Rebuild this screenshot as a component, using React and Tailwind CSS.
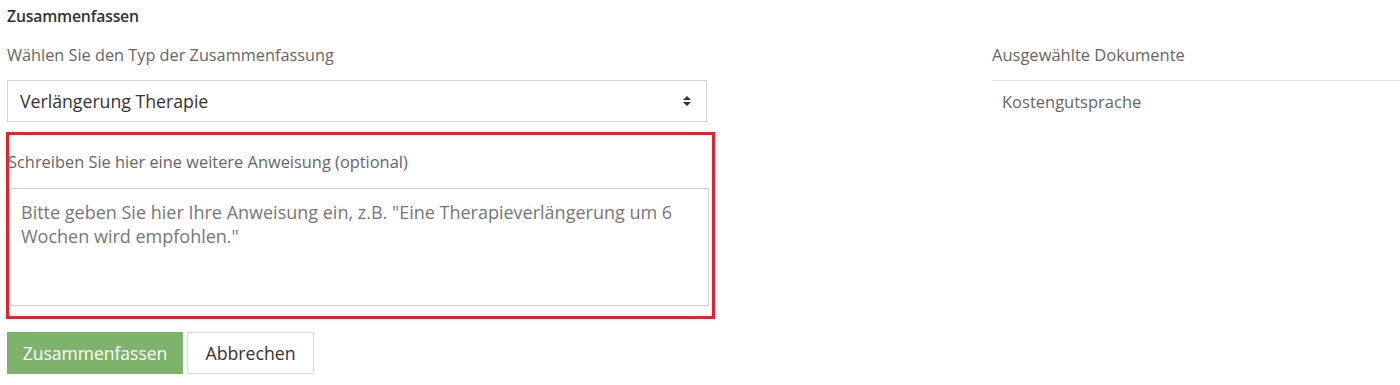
import React from 'react';

const SortIcon = () => (
    <svg width="10" height="14" viewBox="0 0 10 14" className="text-[#333]">
        <path d="M1 6 L5 2 L9 6 Z" fill="currentColor" />
        <path d="M1 8 L5 12 L9 8 Z" fill="currentColor" />
    </svg>
);

const App = () => {
    return (
        <div className="w-[1400px] h-[385px] bg-white overflow-hidden font-['Open_Sans',sans-serif] flex pl-[7px]">
            <div className="w-[709px] shrink-0">
                <h2 className="text-[15.8px] leading-5 font-semibold text-[#333] pt-[6px] tracking-[-0.2px]">Zusammenfassen</h2>
                <label className="block mt-[19px] text-[16.3px] leading-5 text-[#666]">
                    Wählen Sie den Typ der Zusammenfassung
                </label>
                <div className="mt-[15px] w-[700px] h-[42px] border border-[#d4d4d4] flex items-center justify-between pl-[12px] pr-[14px]">
                    <span className="text-[17.7px] text-[#333]">Verlängerung Therapie</span>
                    <SortIcon />
                </div>
                <div className="mt-[10px] -ml-px w-[709px] h-[187px] border-[3px] border-[#e8202b] pt-[17px]">
                    <label className="block text-[16.4px] leading-5 text-[#666] -ml-px">
                        Schreiben Sie hier eine weitere Anweisung (optional)
                    </label>
                    <textarea
                        className="mt-[16px] block w-[700px] h-[118px] border border-[#d0d0d0] resize-none pl-[11px] pr-[12px] py-[11px] text-[18px] leading-6 placeholder:text-[#777] outline-none"
                        placeholder={'Bitte geben Sie hier Ihre Anweisung ein, z.B. "Eine Therapieverlängerung um 6 Wochen wird empfohlen."'}
                    />
                </div>
                <div className="mt-[13px] flex gap-[4px]">
                    <button className="h-[42px] w-[176px] bg-[#7db36b] text-white text-[17.5px]">Zusammenfassen</button>
                    <button className="h-[42px] w-[127px] bg-white border border-[#ddd] text-[#333] text-[17.7px]">Abbrechen</button>
                </div>
            </div>
            <div className="ml-[276px] flex-1">
                <div className="mt-[45px] text-[16.5px] leading-5 text-[#666] pb-[15px] border-b border-[#e3e3e3]">
                    Ausgewählte Dokumente
                </div>
                <div className="mt-[11px] pl-[10px] text-[16.5px] leading-5 text-[#666]">Kostengutsprache</div>
            </div>
        </div>
    );
};

export default App;
